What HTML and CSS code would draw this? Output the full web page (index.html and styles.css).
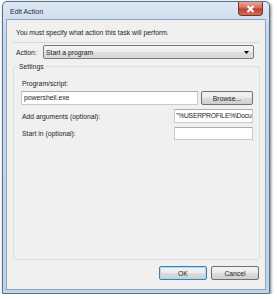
FILE: index.html
```
<!DOCTYPE html>
<html lang="en">
<head>
    <meta charset="UTF-8">
    <title>Edit Action</title>
    <link rel="stylesheet" href="styles.css">
</head>
<body>
    <div class="window">
        <div class="titlebar">
            <span class="title">Edit Action</span>
            <button class="close">
                <svg width="9" height="8" viewBox="0 0 9 8"><path d="M1.5 1 L7.5 7 M7.5 1 L1.5 7" stroke="#fff" stroke-width="2"/></svg>
            </button>
        </div>
        <div class="client">
            <div class="message">You must specify what action this task will perform.</div>
            <div class="separator"></div>
            <div class="action-row">
                <span class="action-label">Action:</span>
                <div class="combo">
                    <span>Start a program</span>
                    <svg width="5" height="3" viewBox="0 0 5 3"><path d="M0 0 H5 L2.5 3 Z" fill="#000"/></svg>
                </div>
            </div>
            <fieldset class="settings">
                <legend>Settings</legend>
                <div class="fields">
                    <div class="label">Program/script:</div>
                    <div class="row program">
                        <div class="input wide">powershell.exe</div>
                        <button class="btn browse">Browse...</button>
                    </div>
                    <div class="row args">
                        <span class="label">Add arguments (optional):</span>
                        <div class="input small tight">"%USERPROFILE%\Docu</div>
                    </div>
                    <div class="row start">
                        <span class="label">Start in (optional):</span>
                        <div class="input small"></div>
                    </div>
                </div>
            </fieldset>
            <div class="buttons">
                <button class="btn default">OK</button>
                <button class="btn">Cancel</button>
            </div>
        </div>
    </div>
</body>
</html>
```

FILE: styles.css
```
body { margin: 0; background: #fff; font-family: "Liberation Sans", Arial, sans-serif; font-size: 6.8px; line-height: 9px; color: #1e1e1e; }
.window { margin: 1px 0 0 2px; width: 268px; height: 293px; box-sizing: border-box; border: 1px solid #5f7189; border-radius: 5px 5px 0 0; background: linear-gradient(#dde8f4, #c4d8ee 30px, #bcd3ec); box-shadow: 1px 1px 3px rgba(0, 0, 0, 0.55); padding: 0 3px 3px 3px; }
.titlebar { height: 17px; display: flex; justify-content: space-between; }
.title { padding: 5px 0 0 4px; color: #1b2a3d; font-size: 7px; }
.close { width: 25px; height: 14px; margin: 0 3px 0 0; padding: 0; border: 1px solid #76302a; border-top: none; border-radius: 0 0 4px 4px; background: linear-gradient(#eaa99a, #d26a5c 45%, #c0412f 55%, #d0705b); display: flex; align-items: center; justify-content: center; }
.client { height: 271px; box-sizing: border-box; border: 1px solid #8ea3bc; background: #f0f0f0; padding: 0 5px 0 6px; }
.message { margin-top: 8px; padding-left: 3px; }
.separator { margin-top: 5px; height: 1px; background: #d9d9d9; width: 246px; }
.action-row { margin-top: 2px; height: 14px; display: flex; align-items: center; }
.action-label { width: 27px; padding-left: 3px; }
.combo { width: 211px; height: 14px; box-sizing: border-box; border: 1px solid #7a7a7a; border-radius: 2px; background: linear-gradient(#f4f4f4, #ececec 50%, #dedede 51%, #d8d8d8); display: flex; align-items: center; justify-content: space-between; padding: 0 4px 0 2px; }
.settings { margin: 3px 0 0 0; width: 247px; height: 198px; box-sizing: border-box; border: 1px solid #d5dfe5; border-radius: 3px; padding: 0 3px; }
.settings legend { padding: 0 2px; }
.fields { margin-left: 4px; width: 232px; }
.fields > .label { margin-top: 8px; padding-left: 1px; }
.row { display: flex; align-items: center; justify-content: space-between; }
.row .label { padding-left: 1px; }
.program { margin-top: 3px; }
.args { margin-top: 4px; }
.start { margin-top: 4px; }
.input { height: 14px; box-sizing: border-box; border: 1px solid #c5cad1; border-top-color: #abadb3; background: #fff; padding: 0 2px; white-space: nowrap; overflow: hidden; line-height: 12px; }
.input.wide { width: 177px; }
.input.small { width: 79px; }
.input.tight { padding: 0 1px; letter-spacing: -0.25px; }
.start .input { height: 13px; }
.btn { height: 14px; box-sizing: border-box; border: 1px solid #707070; border-radius: 2px; background: linear-gradient(#f2f2f2, #ebebeb 50%, #dddddd 51%, #cfcfcf); font: inherit; color: inherit; padding: 0; }
.browse { width: 52px; }
.buttons { margin-top: 6px; display: flex; justify-content: flex-end; gap: 4px; padding-right: 1px; }
.buttons .btn { width: 48px; }
.btn.default { border-color: #3c7fb1; box-shadow: inset 0 0 0 1px #a8dbf5; }
```
